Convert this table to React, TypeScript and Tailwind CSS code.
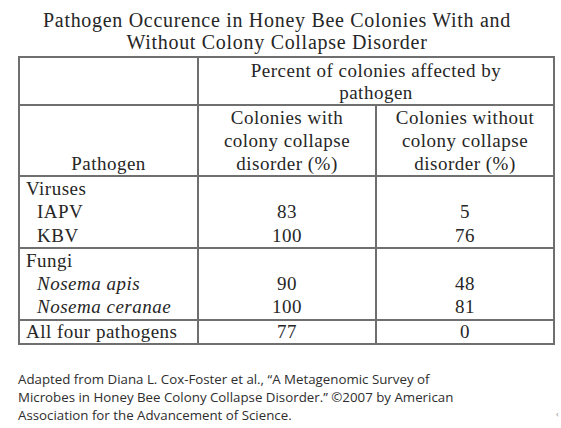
export default function App() {
  return (
    <div className="w-[561px] h-[428px] bg-white relative overflow-hidden">
      {/* TITLE */}
      <div
        className="w-[554px] pt-[9px] text-center text-[20px] leading-[22px] tracking-[0.7px] text-[#262626]"
        style={{ fontFamily: '"Liberation Serif", serif' }}
      >
        <div>Pathogen Occurence in Honey Bee Colonies With and</div>
        <div>Without Colony Collapse Disorder</div>
      </div>

      {/* TABLE */}
      <table
        className="ml-[18px] mt-[3px] border-collapse text-[19px] leading-[23px] tracking-[0.5px] text-[#262626]"
        style={{ fontFamily: '"Liberation Serif", serif' }}
      >
        <colgroup>
          <col className="w-[179px]" />
          <col className="w-[178px]" />
          <col className="w-[178px]" />
        </colgroup>
        <tbody>
          <tr>
            <td className="border-2 border-[#6f6f6f] h-[46px]" />
            <td colSpan={2} className="border-2 border-[#6f6f6f] text-center align-top leading-[22px] pt-[2px]">
              Percent of colonies affected by
              <br />
              pathogen
            </td>
          </tr>
          <tr>
            <td className="border-2 border-[#6f6f6f] h-[71px] text-center align-bottom">
              Pathogen
            </td>
            <td className="border-2 border-[#6f6f6f] text-center align-bottom">
              Colonies with
              <br />
              colony collapse
              <br />
              disorder (%)
            </td>
            <td className="border-2 border-[#6f6f6f] text-center align-bottom">
              Colonies without
              <br />
              colony collapse
              <br />
              disorder (%)
            </td>
          </tr>
          <Group
            label="Viruses"
            rows={[
              { name: "IAPV", a: "83", b: "5" },
              { name: "KBV", a: "100", b: "76" },
            ]}
          />
          <Group
            label="Fungi"
            italic
            rows={[
              { name: "Nosema apis", a: "90", b: "48" },
              { name: "Nosema ceranae", a: "100", b: "81" },
            ]}
          />
          <tr>
            <td className="border-2 border-[#6f6f6f] pl-[6px] h-[24px] leading-[21px]">
              All four pathogens
            </td>
            <td className="border-2 border-[#6f6f6f] text-center leading-[21px]">77</td>
            <td className="border-2 border-[#6f6f6f] text-center leading-[21px]">0</td>
          </tr>
        </tbody>
      </table>

      {/* SOURCE */}
      <p
        className="ml-[18px] mt-[25px] text-[13.3px] leading-[18px] text-[#2e2e2e]"
        style={{ fontFamily: '"Open Sans", sans-serif' }}
      >
        Adapted from Diana L. Cox-Foster et al., “A Metagenomic Survey of
        <br />
        Microbes in Honey Bee Colony Collapse Disorder.” ©2007 by American
        <br />
        Association for the Advancement of Science.
      </p>

      <span className="absolute left-[556px] top-[407px] text-[9px] text-[#999999]">‹</span>
    </div>
  );
}

function Group({
  label,
  rows,
  italic,
}: {
  label: string;
  rows: { name: string; a: string; b: string }[];
  italic?: boolean;
}) {
  return (
    <tr>
      <td className="border-2 border-[#6f6f6f] pl-[6px] align-top leading-[23.3px]">
        <div>{label}</div>
        {rows.map((r) => (
          <div key={r.name} className={italic ? "pl-[11px] italic" : "pl-[11px]"}>
            {r.name}
          </div>
        ))}
      </td>
      <td className="border-2 border-[#6f6f6f] text-center align-top leading-[23.3px]">
        <div>&nbsp;</div>
        {rows.map((r) => (
          <div key={r.name}>{r.a}</div>
        ))}
      </td>
      <td className="border-2 border-[#6f6f6f] text-center align-top leading-[23.3px]">
        <div>&nbsp;</div>
        {rows.map((r) => (
          <div key={r.name}>{r.b}</div>
        ))}
      </td>
    </tr>
  );
}
